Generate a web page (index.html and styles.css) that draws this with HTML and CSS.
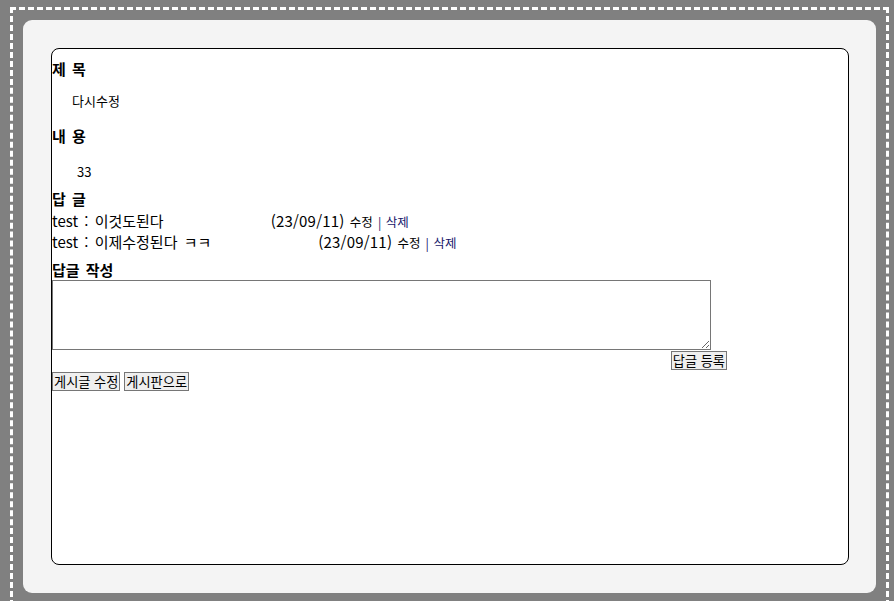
FILE: index.html
```html
<!DOCTYPE html>
<html lang="ko">
<head>
<meta charset="utf-8">
<title>게시글</title>
<link rel="stylesheet" href="styles.css">
</head>
<body>
<div class="panel">
  <div class="card">
    <div class="label label-title">제 목</div>
    <div class="value value-title">다시수정</div>
    <div class="label label-content">내 용</div>
    <div class="value value-content">33</div>
    <div class="label label-reply">답 글</div>
    <div class="reply reply-first">
      <span class="reply-text">test : 이것도된다</span><span class="reply-meta"><span class="date">(23/09/11)</span> <span class="act">수정</span> <span class="act act-del">| 삭제</span></span>
    </div>
    <div class="reply">
      <span class="reply-text">test : 이제수정된다 ㅋㅋ</span><span class="reply-meta"><span class="date">(23/09/11)</span> <span class="act">수정</span> <span class="act act-del">| 삭제</span></span>
    </div>
    <div class="label label-write">답글 작성</div>
    <textarea class="reply-input"></textarea>
    <div class="submit-row"><button class="btn">답글 등록</button></div>
    <div class="actions"><button class="btn">게시글 수정</button><button class="btn">게시판으로</button></div>
  </div>
</div>
</body>
</html>
```
FILE: styles.css
```css
html {
  background: #808080;
}
body {
  margin: 7px 5px 0 10px;
  border: 3px dashed #ffffff;
  padding: 10px;
  font-family: "Noto Sans CJK KR", "Noto Sans", sans-serif;
  color: #000;
}
.panel {
  background: #f4f4f4;
  border-radius: 9px;
  padding: 28px 27px 28px 28px;
}
.card {
  background: #fff;
  border: 1px solid #000;
  border-radius: 8px;
  height: 515px;
}
.label {
  font-weight: bold;
  font-size: 15px;
  line-height: 20px;
  height: 20px;
  word-spacing: 2px;
}
.label-title { margin-top: 10px; }
.label-content { margin-top: 16px; }
.label-reply { margin-top: 8px; }
.label-write { margin-top: 8px; }
.value {
  font-size: 13px;
  line-height: 18px;
  height: 18px;
}
.value-title { margin-top: 13px; padding-left: 20px; }
.value-content { margin-top: 17px; padding-left: 25px; }
.reply {
  font-size: 15px;
  line-height: 21px;
  height: 21px;
  white-space: nowrap;
  word-spacing: 2px;
}
.reply-first { margin-top: 1px; }
.reply-meta { margin-left: 107px; word-spacing: 1px; }
.date { letter-spacing: 0.2px; }
.act { font-size: 12.5px; }
.act-del { color: #16166a; }
.reply-input {
  display: block;
  box-sizing: border-box;
  width: 659px;
  height: 70px;
  margin: 0;
  border: 1px solid #767676;
  padding: 2px;
}
.submit-row {
  width: 675px;
  text-align: right;
  margin-top: 1px;
  height: 19px;
}
.actions {
  margin-top: 2px;
  display: flex;
  gap: 4px;
}
.btn {
  font-family: "Noto Sans CJK KR", sans-serif;
  font-size: 13.2px;
  line-height: 17px;
  height: 19px;
  padding: 0 1px;
  margin: 0;
  border: 1px solid #767676;
  background: #efefef;
  color: #000;
  vertical-align: top;
}
```
